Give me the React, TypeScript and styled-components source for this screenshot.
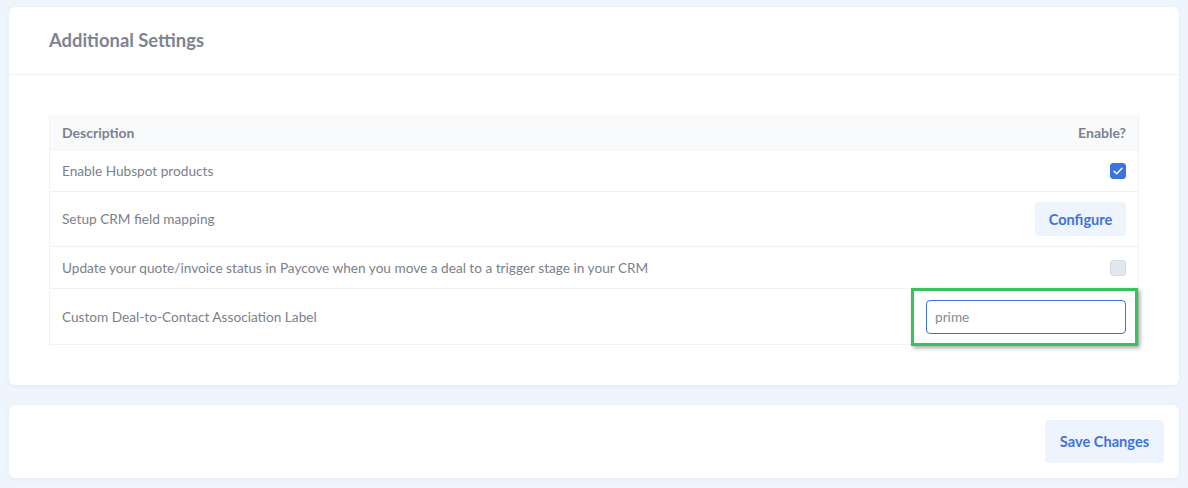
import styled, { createGlobalStyle } from "styled-components";

const GlobalStyle = createGlobalStyle`
  body {
    margin: 0;
    background: #eef5fd;
    font-family: 'Lato', 'Liberation Sans', sans-serif;
  }
`;

const Page = styled.div`
  padding: 7px 9px 10px 9px;
  display: flex;
  flex-direction: column;
  gap: 20px;
`;

const Card = styled.div`
  background: #fff;
  border-radius: 6px;
  box-shadow: 0 1px 4px rgba(82, 120, 170, 0.08);
`;

const CardHeader = styled.div`
  height: 67px;
  display: flex;
  align-items: center;
  padding: 0 40px;
  border-bottom: 1px solid #eff2f5;
`;

const CardTitle = styled.h3`
  margin: 0 0 2px 0;
  font-size: 18.4px;
  font-weight: 700;
  color: #7e8392;
`;

const CardBody = styled.div`
  padding: 40px 40px 40px 40px;
`;

const Table = styled.div`
  border: 1px solid #f0f2f5;
  border-top: none;
`;

const Row = styled.div<{ $tall?: boolean; $head?: boolean }>`
  display: flex;
  align-items: center;
  justify-content: space-between;
  height: ${(p) => (p.$head ? 35 : p.$tall ? 55 : 42)}px;
  padding: 0 12px;
  background: ${(p) => (p.$head ? "#f9fafc" : "#fff")};
  border-bottom: 1px solid #eff2f5;
  box-sizing: border-box;
  &:last-child {
    border-bottom: none;
  }
`;

const HeadCell = styled.span`
  font-size: 14px;
  font-weight: 700;
  color: #7c8190;
`;

const Cell = styled.span`
  font-size: 13.65px;
  color: #7b7f8c;
`;

const Check = styled.span<{ $on?: boolean }>`
  width: 16px;
  height: 16px;
  border-radius: 3px;
  box-sizing: border-box;
  display: inline-flex;
  align-items: center;
  justify-content: center;
  background: ${(p) => (p.$on ? "#3b74e0" : "#e2e8ef")};
  border: 1px solid ${(p) => (p.$on ? "#3b74e0" : "#d3dae3")};
`;

const SoftButton = styled.button<{ $h: number; $w: number }>`
  height: ${(p) => p.$h}px;
  width: ${(p) => p.$w}px;
  border: none;
  border-radius: 4px;
  background: #eef4fd;
  color: #3f72d9;
  font-family: inherit;
  font-size: 14.6px;
  font-weight: 700;
  cursor: pointer;
`;

const InputWrap = styled.div`
  position: relative;
  display: flex;
`;

const Highlight = styled.div`
  position: absolute;
  left: -15px;
  right: -12px;
  top: -12px;
  bottom: -12px;
  border: 3px solid #35c45a;
  box-shadow: 2px 2px 4px rgba(0, 0, 0, 0.35);
  pointer-events: none;
`;

const TextInput = styled.input`
  width: 200px;
  height: 34px;
  box-sizing: border-box;
  border: 1px solid #3e74d8;
  border-radius: 4px;
  padding: 0 8px;
  font-family: inherit;
  font-size: 13.65px;
  color: #858a97;
  outline: none;
`;

const Footer = styled.div`
  display: flex;
  justify-content: flex-end;
  padding: 15px 15px 15px 15px;
`;

const CheckMark = () => (
  <svg width="10" height="8" viewBox="0 0 10 8" fill="none">
    <path d="M1 4.2 L3.7 6.8 L9 1.2" stroke="#fff" strokeWidth="1.4" strokeLinecap="round" strokeLinejoin="round" />
  </svg>
);

export default function App() {
  return (
    <>
      <GlobalStyle />
      <Page>
        <Card>
          <CardHeader>
            <CardTitle>Additional Settings</CardTitle>
          </CardHeader>
          <CardBody>
            <Table>
              <Row $head>
                <HeadCell>Description</HeadCell>
                <HeadCell>Enable?</HeadCell>
              </Row>
              <Row>
                <Cell>Enable Hubspot products</Cell>
                <Check $on>
                  <CheckMark />
                </Check>
              </Row>
              <Row $tall>
                <Cell>Setup CRM field mapping</Cell>
                <SoftButton $h={34} $w={91}>Configure</SoftButton>
              </Row>
              <Row>
                <Cell>Update your quote/invoice status in Paycove when you move a deal to a trigger stage in your CRM</Cell>
                <Check />
              </Row>
              <Row $tall>
                <Cell>Custom Deal-to-Contact Association Label</Cell>
                <InputWrap>
                  <Highlight />
                  <TextInput defaultValue="prime" />
                </InputWrap>
              </Row>
            </Table>
          </CardBody>
        </Card>
        <Card>
          <Footer>
            <SoftButton $h={43} $w={119}>Save Changes</SoftButton>
          </Footer>
        </Card>
      </Page>
    </>
  );
}
